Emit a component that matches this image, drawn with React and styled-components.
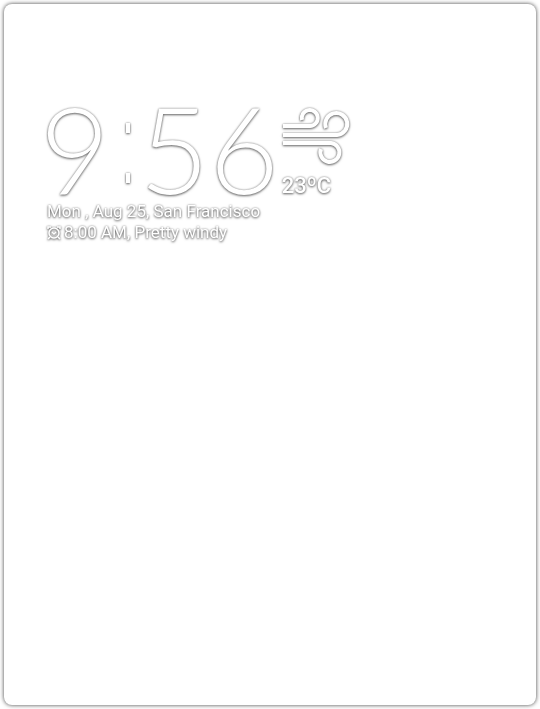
import React from "react";
import styled, { createGlobalStyle } from "styled-components";

const GlobalStyle = createGlobalStyle`
  * { box-sizing: border-box; }
  body { margin: 0; background: #fff; font-family: Roboto, "Liberation Sans", sans-serif; }
`;

const Screen = styled.main`
  display: flex;
  min-height: 100vh;
  padding: 4px;
`;

const Card = styled.section`
  flex: 1;
  padding: 100px 43px 40px;
  background: #fff;
  border-radius: 8px;
  box-shadow: 0 0 4px rgba(0, 0, 0, 0.75);
  color: #fff;
`;

const glow = "drop-shadow(0 0 1px rgba(0, 0, 0, 0.35)) drop-shadow(0 1px 1px rgba(0, 0, 0, 0.5))";

const Top = styled.div`
  display: flex;
  align-items: flex-start;
  height: 97px;
`;

const Clock = styled.time`
  display: flex;
  flex: none;
  margin-left: -7px;
  font-family: Lato, "Liberation Sans", sans-serif;
  font-size: 120px;
  font-weight: 300;
  line-height: 88px;
  filter: ${glow};
`;

const Colon = styled.span`
  display: flex;
  flex: none;
  flex-direction: column;
  gap: 40px;
  width: 4px;
  margin: 19px 10px 0 16px;
`;

const Tick = styled.span`
  flex: none;
  height: 10px;
  background: #fff;
`;

const Weather = styled.div`
  display: flex;
  flex-direction: column;
  margin-top: 3px;
  margin-left: 3px;
`;

const WindSvg = styled.svg`
  display: block;
  overflow: visible;
  filter: ${glow};
`;

const Temperature = styled.span`
  margin-top: 5px;
  font-size: 22px;
  font-weight: 500;
  line-height: 28px;
  filter: ${glow};
`;

const Line = styled.p`
  display: flex;
  align-items: center;
  gap: 3px;
  margin: 0;
  font-size: 17px;
  line-height: 21px;
  white-space: pre;
  filter: ${glow};
`;

const AlarmSvg = styled.svg`
  display: block;
  overflow: visible;
`;

function WindIcon() {
  return (
    <WindSvg width="68" height="60" viewBox="282 107 68 60" fill="none" stroke="#fff" strokeWidth="4" role="img" aria-label="Windy">
      <path d="M283 126H310A8 8 0 1 0 302 120" />
      <path d="M283 135H337A11 11 0 1 0 326 128" />
      <path d="M283 143H331A9.5 9.5 0 1 1 321 149" />
    </WindSvg>
  );
}

function AlarmIcon() {
  return (
    <AlarmSvg width="14" height="14" viewBox="0 0 14 14" fill="none" stroke="#fff" strokeWidth="1.5" role="img" aria-label="Alarm">
      <circle cx="7" cy="7" r="5" />
      <path d="M1 3V1H4M10 1H13V3M3 11L1 13M11 11L13 13M5 6L7 8L9 6" />
    </AlarmSvg>
  );
}

export default function App() {
  return (
    <>
      <GlobalStyle />
      <Screen>
        <Card>
          <Top>
            <Clock dateTime="09:56" aria-label="9:56">
              <span>9</span>
              <Colon><Tick /><Tick /></Colon>
              <span>56</span>
            </Clock>
            <Weather>
              <WindIcon />
              <Temperature>23ºC</Temperature>
            </Weather>
          </Top>
          <Line>Mon , Aug 25, San Francisco</Line>
          <Line><AlarmIcon />8:00 AM, Pretty windy</Line>
        </Card>
      </Screen>
    </>
  );
}
